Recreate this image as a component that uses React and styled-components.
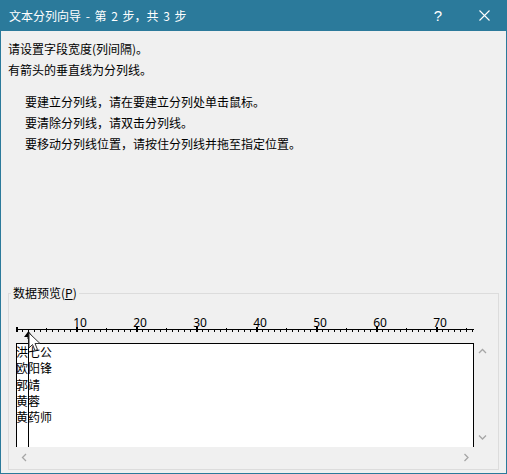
import styled, { createGlobalStyle } from "styled-components";

const GlobalStyle = createGlobalStyle`
html, body {
  margin: 0;
  padding: 0;
  background: #f0f0f0;
}
* {
  box-sizing: border-box;
}
`

const FONT = `"Noto Sans CJK SC", "Noto Sans", sans-serif`

const Window = styled.div`
display: flex;
flex-direction: column;
width: 507px;
height: 474px;
background: #f0f0f0;
border: 1px solid #2b7a9b;
border-top: none;
font-family: ${FONT};
font-size: 12px;
color: #000;
`

const TitleBar = styled.div`
display: flex;
align-items: center;
height: 31px;
margin: 0 -1px;
padding-left: 9px;
background: #2b7a9b;
color: #fff;
flex-shrink: 0;
`

const TitleText = styled.span`
flex: 1;
font-size: 12px;
line-height: 16px;
word-spacing: 2px;
`

const TitleButton = styled.div`
display: flex;
align-items: center;
justify-content: center;
width: 46px;
height: 31px;
color: #fff;
font-family: "Liberation Sans", sans-serif;
font-size: 15px;
`

const Body = styled.div`
display: flex;
flex-direction: column;
padding: 7px 7px 0 7px;
`

const Line = styled.div`
line-height: 21px;
height: 21px;
white-space: nowrap;
`

const Steps = styled.div`
margin-top: 11px;
padding-left: 17px;
`

const GroupBox = styled.fieldset`
margin: 131px 0 0 0;
padding: 0 2px 2px 2px;
height: 185px;
border: 1px solid #dcdcdc;
min-width: 0;
`

const Legend = styled.legend`
padding: 0 2px;
line-height: 16px;
font-size: 12px;
color: #000;
`

const Preview = styled.div`
position: relative;
margin-left: 5px;
`

const Ruler = styled.svg`
display: block;
width: 460px;
height: 42px;
`

const ListFrame = styled.div`
display: grid;
grid-template-columns: 458px 17px;
grid-template-rows: 104px 20px;
`

const DataBox = styled.div`
background: #fff;
border: 1px solid #000;
border-bottom: none;
overflow: hidden;
`

const DataRow = styled.div`
line-height: 16.3px;
height: 16.3px;
white-space: pre;
margin-left: -1px;
`

const ScrollTrack = styled.div`
display: flex;
flex-direction: ${(p) => (p.$vertical ? "column" : "row")};
justify-content: space-between;
align-items: center;
padding: ${(p) => (p.$vertical ? "5px 0 6px 0" : "0 4px 0 5px")};
background: #f0f0f0;
`

const BreakLine = styled.div`
position: absolute;
left: 12px;
top: 36px;
width: 1px;
height: 110px;
background: #000;
`

const Marker = styled.svg`
position: absolute;
left: 8px;
top: 30px;
width: 10px;
height: 8px;
`

const Cursor = styled.svg`
position: absolute;
left: 12px;
top: 31px;
width: 14px;
height: 21px;
`

const Chevron = ({ dir }) => {
  const paths = {
    up: "M1 5 L4.5 1.5 L8 5",
    down: "M1 1.5 L4.5 5 L8 1.5",
    left: "M5 1 L1.5 4.5 L5 8",
    right: "M1.5 1 L5 4.5 L1.5 8",
  }
  const vertical = dir === "up" || dir === "down"
  return (
    <svg width={vertical ? 9 : 7} height={vertical ? 7 : 9} viewBox={vertical ? "0 0 9 7" : "0 0 7 9"}>
      <path d={paths[dir]} fill="none" stroke="#a6a6a6" strokeWidth="1.3" />
    </svg>
  )
}

const ticks = Array.from({ length: 77 }, (_, i) => i)
const names = ["洪七公", "欧阳锋", "郭靖", "黄蓉", "黄药师"]

const App = () => {
  return (
    <>
      <GlobalStyle />
      <Window>
        <TitleBar>
          <TitleText>文本分列向导 - 第 2 步，共 3 步</TitleText>
          <TitleButton>?</TitleButton>
          <TitleButton>
            <svg width="11" height="11" viewBox="0 0 11 11">
              <path d="M0.5 0.5 L10.5 10.5 M10.5 0.5 L0.5 10.5" stroke="#fff" strokeWidth="1.1" />
            </svg>
          </TitleButton>
        </TitleBar>
        <Body>
          <Line>请设置字段宽度(列间隔)。</Line>
          <Line>有箭头的垂直线为分列线。</Line>
          <Steps>
            <Line>要建立分列线，请在要建立分列处单击鼠标。</Line>
            <Line>要清除分列线，请双击分列线。</Line>
            <Line>要移动分列线位置，请按住分列线并拖至指定位置。</Line>
          </Steps>
          <GroupBox>
            <Legend>数据预览(<u>P</u>)</Legend>
            <Preview>
              <Ruler viewBox="0 0 460 42">
                <rect x="0" y="28" width="458" height="1" fill="#000" />
                {ticks.map((i) => {
                  const x = i * 6
                  if (i % 10 === 0) return <rect key={i} x={x} y="26" width="2" height="5" fill="#000" />
                  if (i % 5 === 0) return <rect key={i} x={x} y="27" width="1" height="4" fill="#000" />
                  return <rect key={i} x={x} y="29" width="1" height="2" fill="#000" />
                })}
                {[10, 20, 30, 40, 50, 60, 70].map((n) => (
                  <text
                    key={n}
                    x={n * 6 + 4}
                    y="26"
                    textAnchor="middle"
                    fontFamily="'Noto Sans', sans-serif"
                    fontSize="12"
                    fill="#000"
                  >
                    {n}
                  </text>
                ))}
              </Ruler>
              <ListFrame>
                <DataBox>
                  {names.map((n) => (
                    <DataRow key={n}>{n}</DataRow>
                  ))}
                </DataBox>
                <ScrollTrack $vertical>
                  <Chevron dir="up" />
                  <Chevron dir="down" />
                </ScrollTrack>
                <ScrollTrack>
                  <Chevron dir="left" />
                  <Chevron dir="right" />
                </ScrollTrack>
                <ScrollTrack />
              </ListFrame>
              <BreakLine />
              <Marker viewBox="0 0 10 8">
                <path d="M4.5 0 L9 6 L5.5 6 L5.5 8 L3.5 8 L3.5 6 L0 6 Z" fill="#000" />
              </Marker>
              <Cursor viewBox="0 0 14 21">
                <path
                  d="M1 1 L1 16 L4.5 12.5 L7 18.5 L9.5 17.5 L7 11.5 L12 11.5 Z"
                  fill="#fff"
                  stroke="#333"
                  strokeWidth="1"
                  strokeLinejoin="round"
                />
              </Cursor>
            </Preview>
          </GroupBox>
        </Body>
      </Window>
    </>
  )
}

export default App;
